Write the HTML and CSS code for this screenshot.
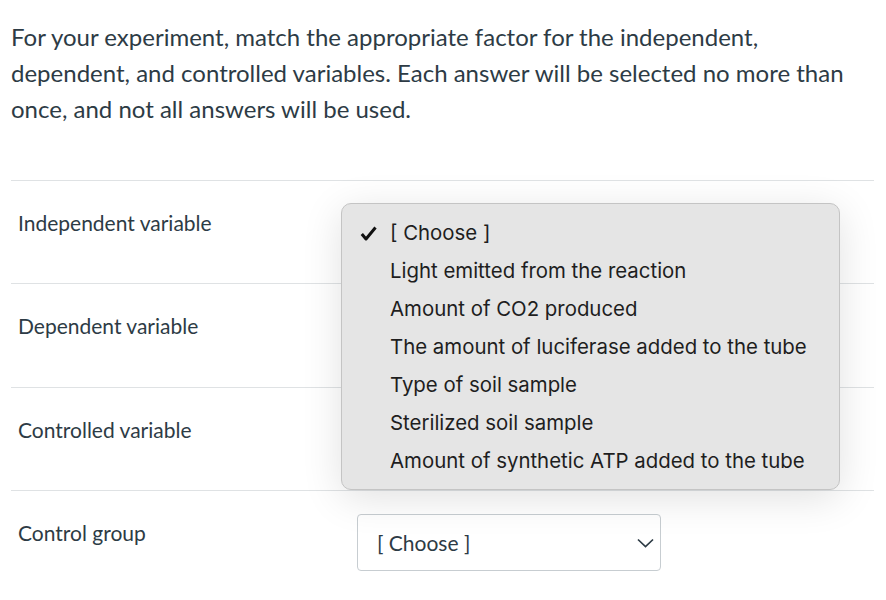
FILE: index.html
```html
<!DOCTYPE html>
<html lang="en">
<head>
    <meta charset="UTF-8">
    <meta name="viewport" content="width=device-width, initial-scale=1.0">
    <title>Matching question</title>
    <link rel="stylesheet" href="styles.css">
</head>
<body>

    <div class="question">
        <p class="question-text">For your experiment, match the appropriate factor for the independent, dependent, and controlled variables. Each answer will be selected no more than once, and not all answers will be used.</p>

        <!-- Answer rows (the first three selects sit under the open menu) -->
        <div class="answers">
            <div class="answer-row">
                <span class="answer-label">Independent variable</span>
                <div class="select-box covered"></div>
            </div>
            <div class="answer-row">
                <span class="answer-label">Dependent variable</span>
                <div class="select-box covered"></div>
            </div>
            <div class="answer-row">
                <span class="answer-label">Controlled variable</span>
                <div class="select-box covered"></div>
            </div>
            <div class="answer-row">
                <span class="answer-label">Control group</span>
                <div class="select-box">
                    <span>[ Choose ]</span>
                    <svg class="chevron" width="17" height="10" viewBox="0 0 17 10"><path d="M1 1.5 L8.5 8.5 L16 1.5" fill="none" stroke="#2d3b45" stroke-width="1.7"/></svg>
                </div>
            </div>
        </div>
    </div>

    <!-- Open dropdown of the first row -->
    <ul class="dropdown-menu">
        <li class="selected">
            <svg class="check" width="17" height="15" viewBox="0 0 17 15"><path d="M1.8 8 L6 13 L15.5 1.5" fill="none" stroke="#111" stroke-width="3" stroke-linejoin="round"/></svg>
            [ Choose ]
        </li>
        <li>Light emitted from the reaction</li>
        <li>Amount of CO2 produced</li>
        <li>The amount of luciferase added to the tube</li>
        <li>Type of soil sample</li>
        <li>Sterilized soil sample</li>
        <li>Amount of synthetic ATP added to the tube</li>
    </ul>

</body>
</html>
```

FILE: styles.css
```css
body {
    font-family: Lato, "Open Sans", sans-serif;
    color: #2d3b45;
    margin: 0;
    padding: 0;
    background-color: white;
}

.question {
    padding: 19px 12px 0 11px;
}

.question-text {
    margin: 0;
    font-size: 24px;
    line-height: 36px;
}

.answers {
    margin-top: 53px;
}

.answer-row {
    display: flex;
    height: 103.33px;
    box-sizing: border-box;
    border-top: 1px solid #dfe2e4;
}

.answer-label {
    width: 339px;
    padding: 29px 0 0 7px;
    font-size: 21px;
    line-height: 26px;
}

.select-box {
    margin-top: 23px;
    width: 304px;
    height: 57px;
    box-sizing: border-box;
    border: 1px solid #c7cdd1;
    border-radius: 4px;
    display: flex;
    align-items: center;
    justify-content: space-between;
    padding: 1px 6px 0 19px;
    font-size: 21px;
}

.select-box.covered {
    visibility: hidden;
}

.chevron {
    margin-top: 1px;
}

.dropdown-menu {
    position: absolute;
    left: 341px;
    top: 203px;
    width: 499px;
    height: 287px;
    box-sizing: border-box;
    margin: 0;
    padding: 10px 0 0 0;
    list-style: none;
    background-color: #e5e5e5;
    border: 1px solid #c4c4c4;
    border-radius: 10px;
    box-shadow: 0 8px 40px rgba(0, 0, 0, 0.12);
    font-family: Inter, "Liberation Sans", sans-serif;
    font-size: 20.4px;
    color: #1e1e1e;
}

.dropdown-menu li {
    position: relative;
    height: 38px;
    line-height: 38px;
    padding-left: 48px;
}

.dropdown-menu .check {
    position: absolute;
    left: 18px;
    top: 12px;
}
```
